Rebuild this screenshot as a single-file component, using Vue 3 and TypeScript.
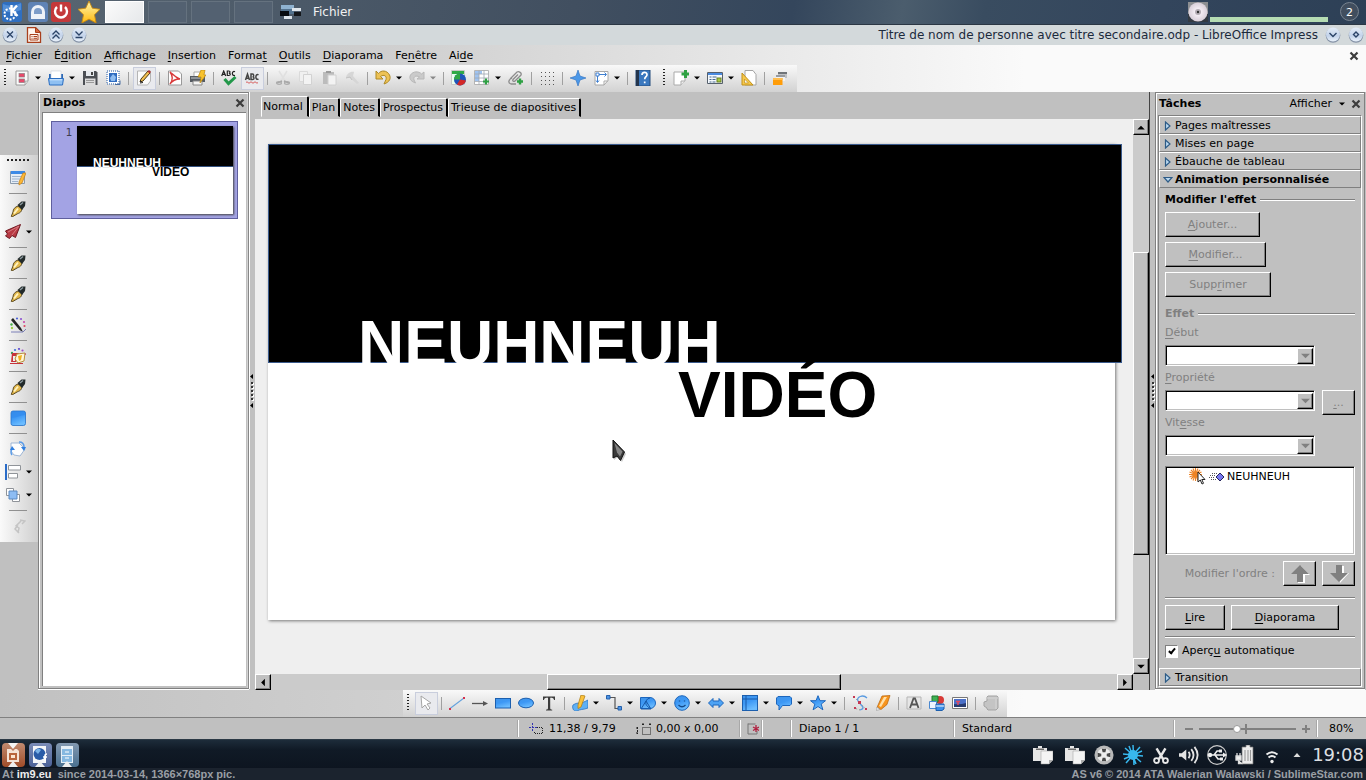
<script setup lang="ts">
import { ref } from 'vue'

interface Tool {
  kind: 'tool' | 'sep' | 'grip'
  icon?: string
  label?: string
  menu?: boolean
  on?: boolean
  off?: boolean
}

const sep: Tool = { kind: 'sep' }
const grip: Tool = { kind: 'grip' }
const t = (icon: string, label: string, flags = ''): Tool => ({
  kind: 'tool',
  icon,
  label,
  menu: flags.includes('m'),
  on: flags.includes('o'),
  off: flags.includes('d'),
})

const menus = ['_Fichier', 'É_dition', '_Affichage', '_Insertion', 'Forma_t', '_Outils', '_Diaporama', 'Fe_nêtre', 'Ai_de']

function accel(text: string): [string, string, string] {
  const i = text.indexOf('_')
  return i < 0 ? [text, '', ''] : [text.slice(0, i), text[i + 1], text.slice(i + 2)]
}

const standardBar: Tool[] = [
  t('new', 'Nouveau', 'm'), t('open', 'Ouvrir', 'm'), t('save', 'Enregistrer'), t('mail', 'Envoyer'), sep,
  t('edit', 'Éditer', 'o'), sep,
  t('pdf', 'Exporter au format PDF'), t('print', 'Imprimer'), sep,
  t('spell', 'Orthographe'), t('autospell', 'Vérification automatique', 'o'), sep,
  t('cut', 'Couper', 'd'), t('copy', 'Copier', 'd'), t('paste', 'Coller', 'd'), t('brush', 'Pinceau', 'd'), sep,
  t('undo', 'Annuler', 'm'), t('redo', 'Rétablir', 'md'), sep,
  t('chart', 'Diagramme'), t('table', 'Tableau', 'm'), t('link', 'Hyperlien'), sep,
  t('grid', 'Grille'), sep,
  t('navigator', 'Navigateur'), t('zoom', 'Zoom', 'm'), sep,
  t('help', 'Aide'), grip,
  t('newslide', 'Nouvelle diapo', 'm'), t('layout', 'Mise en page', 'm'), t('design', 'Conception'), sep,
  t('show', 'Diaporama'),
]

const sideBar: Tool[] = [
  t('form', 'Formulaire'), sep, t('pen', 'Plume'), t('plane', 'Envoi', 'm'), sep, t('pen', 'Ligne'), sep,
  t('pen', 'Courbe'), sep, t('wand', 'Effet'), sep, t('colors', 'Couleur'), sep, t('pen', 'Contour'), sep,
  t('square', 'Remplissage'), sep, t('rotate', 'Pivoter'), t('align', 'Aligner', 'm'), t('arrange', 'Disposer', 'm'), sep,
  t('interact', 'Interaction', 'd'),
]

const drawBar: Tool[] = [
  t('pointer', 'Sélection', 'o'), sep,
  t('line', 'Ligne'), t('arrow', 'Flèche'), t('rect', 'Rectangle'), t('ellipse', 'Ellipse'), t('text', 'Texte'), sep,
  t('curve', 'Courbe', 'm'), t('connector', 'Connecteur', 'm'), t('shapes', 'Formes de base', 'm'),
  t('smiley', 'Formes des symboles', 'm'), t('blockarrow', 'Flèches pleines', 'm'), t('flow', 'Organigramme', 'm'),
  t('callout', 'Légendes', 'm'), t('star', 'Étoiles', 'm'), sep,
  t('points', 'Points'), t('glue', 'Points de collage'), sep,
  t('fontwork', 'Fontwork'), t('gallery', 'Galerie'), t('picture', 'Image'), sep,
  t('extrude', 'Extrusion', 'd'),
]

const tabs = ['Normal', 'Plan', 'Notes', 'Prospectus', 'Trieuse de diapositives']
const activeTab = ref('Normal')
const sections = ['Pages maîtresses', 'Mises en page', 'Ébauche de tableau']
const effectButtons = [
  { label: '_Ajouter...', size: 'b95' },
  { label: '_Modifier...', size: 'b101' },
  { label: 'Supp_rimer', size: 'b106' },
]
const fields = [
  { id: 'debut', label: '_Début', more: false },
  { id: 'propriete', label: '_Propriété', more: true },
  { id: 'vitesse', label: 'Vit_esse', more: false },
]
const tray = ['clip', 'clip', 'reel', 'splat', 'scissors', 'volume', 'usb', 'battery', 'wifi', 'up']
const preview = ref(true)
const zoom = ref(38)
</script>

<template>
  <div class="screen">
    <svg class="sprite" width="0" height="0" aria-hidden="true">
      <defs>
        <linearGradient id="gBlue" x1="0" y1="0" x2="0.4" y2="1">
          <stop offset="0" stop-color="#3f93e8" /><stop offset="0.5" stop-color="#3d98f5" /><stop offset="1" stop-color="#6bbcff" />
        </linearGradient>
        <linearGradient id="gBtn" x1="0" y1="0" x2="0" y2="1">
          <stop offset="0" stop-color="#e4edf8" /><stop offset="0.6" stop-color="#c3d3ea" /><stop offset="1" stop-color="#eaf2fb" />
        </linearGradient>
        <linearGradient id="gStar" x1="0" y1="0" x2="0" y2="1">
          <stop offset="0" stop-color="#fff7b0" /><stop offset="1" stop-color="#ffb90f" />
        </linearGradient>
        <radialGradient id="gDisc"><stop offset="0" stop-color="#999" /><stop offset="0.3" stop-color="#f5eef5" /><stop offset="1" stop-color="#d9cfd9" /></radialGradient>
      </defs>
      <symbol id="i-new" viewBox="0 0 16 16"><path d="M2 1h12v10l-3 4H2z" fill="#fafafa" stroke="#9a9a9a" /><path d="M11 15v-4h3" fill="#ddd" stroke="#9a9a9a" stroke-width=".7" /><rect x="5" y="3.500" width="5.500" height="3.500" fill="#e8496a" stroke="#8b7d80" stroke-width=".7" /><rect x="5" y="9" width="5.500" height="3.500" fill="#e8496a" stroke="#8b7d80" stroke-width=".7" /></symbol>
      <symbol id="i-open" viewBox="0 0 16 16"><path d="M1 8V4h2v-1h10v1h2v4z" fill="#2a67b5" /><path d="M3 1h10v8H3z" fill="#fff" stroke="#c9d2dc" stroke-width=".6" /><path d="M.5 8.500h15l-1 6.500h-13z" fill="#8fc0f2" stroke="#2a6ec2" /><path d="M2 9.800h12" stroke="#d7ebff" /></symbol>
      <symbol id="i-save" viewBox="0 0 16 16"><path d="M1 1h13l1.500 1.500V15H1z" fill="#4c4f54" /><path d="M4 1h8v5H4z" fill="#e7eaee" /><path d="M9 2h2v3H9z" fill="#444" /><path d="M3 8.500h10.500V15H3z" fill="#dcdcdc" /><path d="M4 10.500h8M4 12.500h8" stroke="#999" /></symbol>
      <symbol id="i-mail" viewBox="0 0 16 16"><rect x="2" y="1" width="12" height="13" fill="#fff" stroke="#6b8fc0" stroke-width="1.500" stroke-dasharray="1 1" /><rect x="4" y="3" width="8" height="9" fill="#2f6cc0" /><path d="M5 8l3-4 3 3-1 4H6z" fill="#8fbdf0" /><path d="M10 14.500h5v-4" stroke="#4a6ea0" fill="none" /></symbol>
      <symbol id="i-edit" viewBox="0 0 16 16"><path d="M1.500 1h13v10l-3 4h-10z" fill="#fbfbfb" stroke="#b5b5b5" /><path d="M4 12l1-3 7-8 2 2-7 8z" fill="#f4c04f" stroke="#4a3a18" stroke-width="1" /><path d="M11.500 1.500L13 0l2 2-1.500 1.500z" fill="#b03030" /><path d="M4 12l.5-1.800L6 11.500z" fill="#222" /><path d="M4 13l3-.5" stroke="#222" /></symbol>
      <symbol id="i-pdf" viewBox="0 0 16 16"><path d="M1.500 1h10l3 3v11h-13z" fill="#fdfdfd" stroke="#999" /><path d="M3 2c2 1 4 5 10 7-5 0-8 2-10 5 3-4 3-8 0-12z" fill="none" stroke="#d93a3a" stroke-width="1.300" /></symbol>
      <symbol id="i-print" viewBox="0 0 16 16"><path d="M4 2h8v5H4z" fill="#fff" stroke="#aaa" /><path d="M0 6h15v6H0z" fill="#555b62" /><path d="M1 8h13" stroke="#c8ccd0" /><path d="M3 11h9v4H3z" fill="#f5f5f5" stroke="#888" /><path d="M11 0h4l-1 5h2l-6 8 1-6H8z" fill="#f8c22c" stroke="#b07a00" stroke-width=".6" /></symbol>
      <symbol id="i-spell" viewBox="0 0 16 16"><g fill="none" stroke="#222" stroke-width="1.200"><path d="M.7 6l2-5 2 5M1.400 4.300h2.500M6.300 1v4.500h1.500c2 0 2-2.300 0-2.300 1.600 0 1.600-2.200 0-2.200zM14 1.800c-3-1.800-4 4.500 0 3.600" /></g><path d="M3.500 9l4 4.500L14.500 7" fill="none" stroke="#23984a" stroke-width="3" /></symbol>
      <symbol id="i-autospell" viewBox="0 0 16 16"><g fill="none" stroke="#444" stroke-width="1.500"><path d="M1.500 10l2-6 2 6M2.300 8.200h2.400M7 4v5.500h1.500c2 0 2-2.700 0-2.700 1.600 0 1.600-2.800 0-2.800zM14.500 4.800c-3-1.800-4 5.500 0 4.400" /></g><path d="M2 12.500q1-1.500 2 0t2 0 2 0 2 0 2 0 2 0" fill="none" stroke="#d86060" /></symbol>
      <symbol id="i-cut" viewBox="0 0 16 16"><path d="M4 1l6 10M12 1L6 11" stroke="#e0e0e0" stroke-width="1.500" /><path d="M2 13l5-2M14 13l-5-2" stroke="#a5a5a5" stroke-width="1.500" /><ellipse cx="4" cy="13" rx="2.500" ry="1.300" fill="none" stroke="#adadad" stroke-width="1.200" /><ellipse cx="12" cy="13" rx="2.500" ry="1.300" fill="none" stroke="#adadad" stroke-width="1.200" /></symbol>
      <symbol id="i-copy" viewBox="0 0 16 16"><path d="M1.500 1.500h8v10h-8z" fill="#f0f0f0" stroke="#dadada" /><path d="M5.500 4.500h8v10h-8z" fill="#f3f3f3" stroke="#d2d2d2" /></symbol>
      <symbol id="i-paste" viewBox="0 0 16 16"><path d="M2 2h11v12H2z" fill="#bcbcbc" /><path d="M5 1h5v2H5z" fill="#9b9b9b" /><path d="M7 5h8v10H7z" fill="#f3f3f3" stroke="#d0d0d0" /></symbol>
      <symbol id="i-brush" viewBox="0 0 16 16"><path d="M2 8c0-4 5-7 8-6l-1 4 6 7-2 1-7-6z" fill="#d6d6d6" /><path d="M2 8l4-1 2 3" stroke="#c2c2c2" fill="none" /></symbol>
      <symbol id="i-undo" viewBox="0 0 16 16"><path d="M1 1v8h7L5.500 6.500C9 4 12 6 11 9.500l-2 4.500c6-2 7-6 5.500-9C12 0 6 0 3.500 3.500z" fill="#edc255" stroke="#ae8a27" /></symbol>
      <symbol id="i-redo" viewBox="0 0 16 16"><path d="M15 2v7H8l2.500-2C7 5 4 6.500 5 10l1.500 3C1 11 0 8 1.500 5 4 1 10 1 12.500 4z" fill="#cacaca" stroke="#b8b8b8" /></symbol>
      <symbol id="i-chart" viewBox="0 0 16 16"><path d="M.5.500h13v14H.5z" fill="#eafff0" stroke="#c7c7c7" /><path d="M1 1h12v3H1z" fill="#2faa46" /><circle cx="9" cy="9.500" r="6" fill="#1e55b8" /><path d="M9 9.500V3.500A6 6 0 0 0 3 9.500z" fill="#2fa844" /><path d="M9 9.500l6 1a6 6 0 0 1-9 4z" fill="#d32828" /></symbol>
      <symbol id="i-table" viewBox="0 0 16 16"><path d="M.5.500h14v14H.5z" fill="#fff" stroke="#b5b5b5" /><path d="M1 1h7v3H1zM1 4h4v7H1z" fill="#9fc3f1" /><path d="M.5 4h14M.5 8h14M.5 11.500h14M5 .5v14M10 .5v14" stroke="#9fa6b0" stroke-width=".8" /><path d="M12 8.500v6M9 11.500h6" stroke="#2ea043" stroke-width="2.200" /></symbol>
      <symbol id="i-link" viewBox="0 0 16 16"><path d="M2 9l7-7c2-1 5 1 4 3l-6 6c-1 1-3 0-2-1.500l5-5M4 8c-4 2-4 5-1 6h5" fill="none" stroke="#8d8d8d" stroke-width="1.300" /><path d="M12 8.500v6M9 11.500h6" stroke="#2ea043" stroke-width="2.400" /></symbol>
      <symbol id="i-grid" viewBox="0 0 16 16"><path d="M2 2.500h13M2 6.500h13M2 10.500h13M2 14.500h13" stroke="#555" stroke-dasharray="1 3" /></symbol>
      <symbol id="i-navigator" viewBox="0 0 16 16"><path d="M8 0l2 6 6 2-6 2-2 6-2-6-6-2 6-2z" fill="#4b98e8" stroke="#2e6fc0" stroke-width=".6" /></symbol>
      <symbol id="i-zoom" viewBox="0 0 16 16"><path d="M2 1.500h13v9l-4 4.500H2z" fill="#fff" stroke="#a8a8a8" /><path d="M11 15v-4h4" fill="none" stroke="#a8a8a8" /><path d="M4.500 5v7" fill="none" stroke="#3f7fd0" /><path d="M6 4.500h7M11.500 2.500l2 2-2 2M3 10.500l1.500 2 1.500-2" fill="none" stroke="#3f7fd0" /><path d="M3 3h3v3H3z" fill="#fff" stroke="#3f7fd0" /></symbol>
      <symbol id="i-help" viewBox="0 0 16 16"><path d="M1 0h14v16H1z" fill="#3a78bf" stroke="#244c7c" /><path d="M1 0h3v16H1z" fill="#24354d" /><path d="M7 5c0-3.500 5-3.500 5-.3 0 2-2.300 2-2.300 4.600M9.700 11.500v1.800" fill="none" stroke="#fff" stroke-width="1.700" /></symbol>
      <symbol id="i-newslide" viewBox="0 0 16 16"><path d="M1 2h11v9l-4 4H1z" fill="#fff" stroke="#aaa" /><path d="M8 15v-4h4" fill="#eee" stroke="#aaa" /><path d="M12.500 0v8M8.500 4h8" stroke="#2fa143" stroke-width="3" /></symbol>
      <symbol id="i-layout" viewBox="0 0 16 16"><path d="M.5 2.500h15v11H.5z" fill="#f4f8fd" stroke="#56606c" /><path d="M1 3h14v2H1z" fill="#4b8be0" /><path d="M2.500 7h2M2.500 9.500h2M2.500 12h2M5.500 7h4M5.500 9.500h3M5.500 12h3" stroke="#47698c" /><rect x="10" y="8" width="4" height="4" fill="#a7cc3e" stroke="#667c29" /></symbol>
      <symbol id="i-design" viewBox="0 0 16 16"><path d="M4 .5h8l3 4V15H4z" fill="#fff" stroke="#a5a5a5" /><path d="M1 3v12h11z" fill="#f6c84c" stroke="#c19019" /><path d="M3.500 9v4h4z" fill="#f8f8f8" stroke="#c19019" stroke-width=".7" /></symbol>
      <symbol id="i-show" viewBox="0 0 16 16"><path d="M6 2h9v6H6z" fill="#bfc1c4" /><path d="M6 2h9v2H6z" fill="#707478" /><path d="M4 5h9v6H4z" fill="#f2f2f2" /><path d="M4 5h9v2H4z" fill="#989b9f" /><path d="M1 8h9.500v7H1z" fill="#ff9d0a" /><path d="M1 8h9.500v2H1z" fill="#ffbd4f" /></symbol>
      <symbol id="i-form" viewBox="0 0 16 16"><path d="M.5 1.500h14v12H.5z" fill="#e4ecf5" stroke="#8b9aab" /><path d="M1 1h14v3H1z" fill="#3c8ae6" /><path d="M2 6.500h9M2 9h8M2 11.500h6" stroke="#9fb4cd" /><path d="M13 3h3l-4 10-3 2V12z" fill="#fcb837" stroke="#c47d12" stroke-width=".7" /></symbol>
      <symbol id="i-pen" viewBox="0 0 16 16"><path d="M8 5l4 3c-1 4-3 4-5 5l-5 3-.7-.7L3 11c0-3 2-5 5-6z" fill="#e3b84b" stroke="#5b4a22" /><path d="M4 12.500l4-5" stroke="#fff3c0" stroke-width="2" /><path d="M7.500 4l4-3.500h4L15 5l-3 4z" fill="#222a2a" /><path d="M10 4l3-2.500" stroke="#8f9da3" stroke-width="1.300" /></symbol>
      <symbol id="i-plane" viewBox="0 0 16 16"><path d="M15.500.500L.5 7l2 3-2 2 4 2.500 2.500-3 3.500 2z" fill="#b83a44" stroke="#6e1820" /><path d="M14 2L3 8M14 2L7 11" stroke="#d87a80" /></symbol>
      <symbol id="i-wand" viewBox="0 0 16 16"><path d="M3 1l8 10 2 4-3.500-2L1 3z" fill="#222" /><path d="M1 15h12l3-3" stroke="#7c80b8" fill="none" /><g><circle cx="7" cy="1.500" r="1.100" fill="#4c63d8" /><circle cx="11" cy="2" r="1.100" fill="#8d54d0" /><circle cx="14" cy="5" r="1.100" fill="#c848a8" /><circle cx="14.500" cy="9" r="1.100" fill="#e04860" /><circle cx="1.500" cy="7.500" r="1.200" fill="#48b048" /><circle cx="2" cy="11" r="1.200" fill="#9fce4a" /></g></symbol>
      <symbol id="i-colors" viewBox="0 0 16 16"><g><circle cx="5" cy="2" r="1.100" fill="#3c6dd8" /><circle cx="9" cy="1" r="1.100" fill="#6a54d0" /><circle cx="12.500" cy="2.500" r="1.100" fill="#a048c8" /><circle cx="15" cy="6" r="1.100" fill="#d84890" /><circle cx="2" cy="5" r="1.200" fill="#38a060" /></g><path d="M2 5h7l-3 9H1z" fill="#c8333a" /><path d="M3 8h3l-1 5H3z" fill="#efefef" /><path d="M7 6l8-1-1 8-6 2-3-4z" fill="#fff6d8" stroke="#b5903d" /><path d="M8 8l4-1-1 5-2 1z" fill="#f2b01e" /><path d="M0 15.500h13" stroke="#c8333a" /></symbol>
      <symbol id="i-square" viewBox="0 0 16 16"><rect x="1" y="1" width="14.500" height="14.500" rx="2" fill="url(#gBlue)" stroke="#2471c8" stroke-width=".8" /><path d="M1.500 8c5 0 9-3 14-3V3L14 1H2z" fill="#2a83ea" opacity=".45" /></symbol>
      <symbol id="i-rotate" viewBox="0 0 16 16"><path d="M1 2h8l6 6-5 7-6-1-3-4z" fill="#fdfdfd" stroke="#8aa8cf" stroke-width=".8" /><path d="M9 1c3 0 5 2 5 5M2 14c-2-3-1-4 0-6" fill="none" stroke="#5b9ce8" stroke-width="1.500" /><path d="M11 6h5l-2 4zM0 9h5L2 5z" fill="#2f7fe0" /></symbol>
      <symbol id="i-align" viewBox="0 0 16 16"><path d="M1 0v16" stroke="#2a6cc8" stroke-width="2" /><path d="M3.500 1.500h12v4.500h-12zM3.500 9.500h9V14h-9z" fill="#fff" stroke="#909499" /></symbol>
      <symbol id="i-arrange" viewBox="0 0 16 16"><path d="M1.500 1.500h7v7h-7zM7.500 7.500h7v7h-7z" fill="#fff" stroke="#8f9399" /><path d="M4 4h8v8H4z" fill="#8dbcf3" stroke="#5a88c0" /></symbol>
      <symbol id="i-interact" viewBox="0 0 16 16"><path d="M8 15l1-5-3-2 5-5M10 2l5 1-3 3M8 7l-3 4 4 4" fill="none" stroke="#c4c4c4" stroke-width="1.500" /></symbol>
      <symbol id="i-pointer" viewBox="0 0 16 16"><path d="M3 1l10 7-4 1 3 4-2 2-3-5-3 3z" fill="#fff" stroke="#a5a5a5" /></symbol>
      <symbol id="i-line" viewBox="0 0 16 16"><path d="M1 13.500L15 3" stroke="#67a3dd" stroke-width="1.200" /><path d="M0 13h2v2H0zM14 2h2v2h-2z" fill="#d3304e" /></symbol>
      <symbol id="i-arrow" viewBox="0 0 16 16"><path d="M0 8.500h13" stroke="#555" stroke-width="1.300" /><path d="M11 6l5 2.500L11 11z" fill="#555" /></symbol>
      <symbol id="i-rect" viewBox="0 0 16 16"><rect x=".5" y="3.500" width="15" height="9.500" fill="url(#gBlue)" stroke="#1c5fae" /></symbol>
      <symbol id="i-ellipse" viewBox="0 0 16 16"><ellipse cx="8" cy="8" rx="7.500" ry="4.800" fill="url(#gBlue)" stroke="#1c5fae" /></symbol>
      <symbol id="i-text" viewBox="0 0 16 16"><path d="M2 1.500h12V5h-1c-.4-2-1-2.300-3.800-2.300V13c0 1.500.5 1.500 2 1.700v.8H5v-.8c1.500-.2 2-.2 2-1.700V2.700C4 2.700 3.400 3 3 5H2z" fill="#3c3c3c" /></symbol>
      <symbol id="i-curve" viewBox="0 0 16 16"><path d="M1 10c3-2 5-2 7-2s4-1 8-3v8c-5 2-8 1-11 3-4 1-5-4-4-6z" fill="#5fb0f4" stroke="#2b75c4" stroke-width=".8" /><path d="M9 0l4 1-4 11-3 1.500V10z" fill="#fcc23a" stroke="#b3831c" stroke-width=".8" /></symbol>
      <symbol id="i-connector" viewBox="0 0 16 16"><path d="M2 2.500h7v11h5" fill="none" stroke="#555" stroke-width="1.200" /><path d="M.5.500h3.500V4H.5zM12 11.500h3.500V15H12z" fill="#4e94e4" stroke="#2561ac" /></symbol>
      <symbol id="i-shapes" viewBox="0 0 16 16"><path d="M.5 2.500H10a5.500 5.500 0 0 1 0 11H.5z" fill="url(#gBlue)" stroke="#1c66bd" /><path d="M6 6l-5 8h10zM6 6a5 5 0 0 1 4-3M6 6c-1 3 1 6 4 7" stroke="#1759a8" fill="none" /></symbol>
      <symbol id="i-smiley" viewBox="0 0 16 16"><circle cx="8" cy="8" r="7.300" fill="url(#gBlue)" stroke="#1c66bd" /><path d="M5.500 5.500v1M10.500 5.500v1M4.500 10q3.500 3.500 7 0" stroke="#164a88" stroke-width="1.300" fill="none" /></symbol>
      <symbol id="i-blockarrow" viewBox="0 0 16 16"><path d="M.5 8L5 3.500V6h6V3.500L15.500 8 11 12.500V10H5v2.500z" fill="#4ea3f4" stroke="#1c66bd" /></symbol>
      <symbol id="i-flow" viewBox="0 0 16 16"><rect x=".5" y=".5" width="15" height="15" fill="url(#gBlue)" stroke="#1c5fae" /><path d="M4 .5v15M.5 4h15" stroke="#1759a8" /></symbol>
      <symbol id="i-callout" viewBox="0 0 16 16"><path d="M2 1.500h12l1.500 1.500v6L14 10.500H6.500L3 15v-4.500H2L.5 9V3z" fill="url(#gBlue)" stroke="#1c66bd" /></symbol>
      <symbol id="i-star" viewBox="0 0 16 16"><path d="M8 .7l2 5h5.500l-4.300 3.400 1.700 5.700L8 11.500l-4.900 3.300 1.700-5.700L.5 5.700H6z" fill="url(#gBlue)" stroke="#1c66bd" /></symbol>
      <symbol id="i-points" viewBox="0 0 16 16"><path d="M15 3C11-1 4 2 6 6s9 7 2 9" fill="none" stroke="#5a9be0" stroke-width="1.300" /><path d="M2 2l12 12M8 15l-6-2" stroke="#888" stroke-dasharray="1 2" /><path d="M1 1h2v2H1zM6 6h3v3H6zM2 12h2v2H2zM13 13h2v2h-2z" fill="#c43853" /></symbol>
      <symbol id="i-glue" viewBox="0 0 16 16"><path d="M7 1l8-.5-3 9-6 5-4-2z" fill="#f7941d" stroke="#b3610a" stroke-width=".7" /><path d="M9 2h3l-6 10-2-1z" fill="#ffe0a8" /><path d="M2 12l3 2.500-3.500 1z" fill="#eee" stroke="#999" stroke-width=".6" /></symbol>
      <symbol id="i-fontwork" viewBox="0 0 16 16"><path d="M1 2h14v12H1z" fill="#e6e6e6" stroke="#b5b5b5" /><path d="M4 13l3.500-9.500h1.500L12.500 13M5.500 9.500h5.500" fill="none" stroke="#555" stroke-width="1.800" /></symbol>
      <symbol id="i-gallery" viewBox="0 0 16 16"><circle cx="11" cy="5" r="4" fill="#d83a36" /><path d="M3 1h6v6H3z" fill="#3fb052" stroke="#207a30" /><path d="M.5 6.500h7v7h-7z" fill="#eef5ff" stroke="#4a88d0" /><path d="M7 9h8v5l-2 1.500H7z" fill="#3d8fe8" stroke="#1c5fae" /><path d="M7 11h8" stroke="#fff" /></symbol>
      <symbol id="i-picture" viewBox="0 0 16 16"><path d="M.5 2.500h15v11H.5z" fill="#fff" stroke="#777" /><path d="M2 4h12v8H2z" fill="#4b70c8" /><path d="M2 9q6 1 12-1v4H2z" fill="#283c70" /><path d="M6 10V6M4 6.500h4" stroke="#e24a60" stroke-width="1.500" /></symbol>
      <symbol id="i-extrude" viewBox="0 0 16 16"><path d="M4 2l1-1h9l1 1v11l-2 2H5l-1-1v-1l-3-2V7l3-1z" fill="#c4c4c4" stroke="#a3a3a3" /><path d="M4 3h11M13 4v10" stroke="#d6d6d6" fill="none" /></symbol>
      <symbol id="i-kde" viewBox="0 0 20 20"><rect x="0" y="0" width="20" height="20" rx="3" fill="#2f6fc0" /><path d="M1 2q9 4 18-1v7q-9 4-18 1z" fill="#6ba3e4" opacity=".6" /><circle cx="8" cy="12" r="5.500" fill="none" stroke="#fff" stroke-width="2" stroke-dasharray="2 1.450" /><path d="M9.500 3v11M15 3.500L10.500 8.500 15.500 14" fill="none" stroke="#fff" stroke-width="2.400" /></symbol>
      <symbol id="i-lock" viewBox="0 0 20 20"><rect width="20" height="20" rx="3" fill="#5f83b5" /><path d="M3 17V10a7 7 0 0 1 14 0v7z" fill="#eef2f8" /><path d="M6 12v-2a4 4 0 0 1 8 0v2z" fill="#7c9cc8" /></symbol>
      <symbol id="i-power" viewBox="0 0 20 20"><rect width="20" height="20" rx="3" fill="#c4393a" /><path d="M6 5a6 6 0 1 0 8 0M10 2.500v7" fill="none" stroke="#fff" stroke-width="2.400" /></symbol>
      <symbol id="i-fav" viewBox="0 0 20 20"><path d="M10 0l3 6.500 7 1-5 5 1.500 7.500L10 16.500 3.500 20 5 12.500l-5-5 7-1z" fill="url(#gStar)" stroke="#c98a10" stroke-width=".8" /></symbol>
      <symbol id="i-device" viewBox="0 0 22 18"><path d="M1 2h13v9H1z" fill="#54738f" /><path d="M1 2h13v4H1z" fill="#8fb2d0" /><path d="M0 8h9v5H0z" fill="#090c10" /><path d="M12 5h9v3h-9zM4 13h8v3H4z" fill="#dfe6ec" /><path d="M14 9h7v4h-7z" fill="#15181c" /></symbol>
      <symbol id="i-disc" viewBox="0 0 20 20"><path d="M0 0h20v20H0z" fill="#8d8f92" /><path d="M0 12h20v8H0z" fill="#333a42" /><circle cx="10" cy="10" r="9.500" fill="url(#gDisc)" /><circle cx="10" cy="10" r="3" fill="#b4acb4" /><circle cx="10" cy="10" r="1.200" fill="#333" /></symbol>
      <symbol id="i-odp" viewBox="0 0 16 16"><path d="M1.500.500h8l5 5v10h-13z" fill="#fff6ee" stroke="#a8401c" stroke-width="1.300" /><path d="M9.500.500l5 5h-5z" fill="#d9683c" stroke="#a8401c" /><path d="M4 7.500h8V13H4z" fill="none" stroke="#a8401c" /><path d="M5.500 9.500h1M5.500 11.300h1M7.500 9.500H11M7.500 11.300H11" stroke="#a8401c" /></symbol>
      <symbol id="w-close" viewBox="0 0 16 16"><circle cx="8" cy="8.500" r="7.300" fill="#8492a6" /><circle cx="8" cy="7.500" r="7" fill="url(#gBtn)" /><path d="M5 4.500l6 6M11 4.500l-6 6" stroke="#2b4468" stroke-width="1.300" /></symbol>
      <symbol id="w-shade" viewBox="0 0 16 16"><circle cx="8" cy="8.500" r="7.300" fill="#8492a6" /><circle cx="8" cy="7.500" r="7" fill="url(#gBtn)" /><path d="M4.500 7.500L8 4l3.500 3.500M4.500 11.500L8 8l3.500 3.500" fill="none" stroke="#2b4468" stroke-width="1.300" /></symbol>
      <symbol id="w-keep" viewBox="0 0 16 16"><circle cx="8" cy="8.500" r="7.300" fill="#8492a6" /><circle cx="8" cy="7.500" r="7" fill="url(#gBtn)" /><path d="M4.500 4.500L8 8l3.500-3.500M4.500 10.500h7" fill="none" stroke="#2b4468" stroke-width="1.300" /></symbol>
      <symbol id="w-min" viewBox="0 0 16 16"><circle cx="8" cy="8.500" r="7.300" fill="#8492a6" /><circle cx="8" cy="7.500" r="7" fill="url(#gBtn)" /><path d="M4.500 6L8 9.500 11.500 6" fill="none" stroke="#2b4468" stroke-width="1.400" /></symbol>
      <symbol id="w-max" viewBox="0 0 16 16"><circle cx="8" cy="8.500" r="7.300" fill="#8492a6" /><circle cx="8" cy="7.500" r="7" fill="url(#gBtn)" /><path d="M8 5l2.500 2.500L8 10 5.500 7.500z" fill="none" stroke="#2b4468" stroke-width="1.400" /></symbol>
      <symbol id="i-x" viewBox="0 0 10 10"><path d="M1.500 1.500l7 7M8.500 1.500l-7 7" stroke="#3c3c3c" stroke-width="2.200" /></symbol>
      <symbol id="i-tri" viewBox="0 0 6 4"><path d="M0 .5h6L3 3.500z" fill="currentColor" /></symbol>
      <symbol id="i-split" viewBox="0 0 6 34"><path d="M4 0v5L1 2.500zM4 29v5L1 31.500z" fill="#000" /><path d="M3 9h2v2H3zM3 13h2v2H3zM3 17h2v2H3zM3 21h2v2H3zM3 25h2v2H3z" fill="#fff" /><path d="M2 8h2v2H2zM2 12h2v2H2zM2 16h2v2H2zM2 20h2v2H2zM2 24h2v2H2z" fill="#333" /></symbol>
      <symbol id="i-closed" viewBox="0 0 8 10"><path d="M1.500 1v8L6 5z" fill="#b9d8f0" stroke="#2d5b86" stroke-width="1.200" /></symbol>
      <symbol id="i-opened" viewBox="0 0 10 8"><path d="M1 1.500h8L5 6z" fill="#b9d8f0" stroke="#2d5b86" stroke-width="1.200" /></symbol>
      <symbol id="i-burst" viewBox="0 0 18 18"><path d="M6.500 0v13M0 6.500h13M2 2l9 9M11 2l-9 9M4 .5l5 12M9 .5l-5 12M.5 4l12 5M.5 9l12-5" stroke="#ef8322" stroke-width="1.100" /><path d="M9 4v10l2.300-2 1.700 4 1.500-.7-1.700-3.800H16z" fill="#fff" stroke="#222" /></symbol>
      <symbol id="i-motion" viewBox="0 0 16 10"><path d="M3 1.500h5M1 3.500h6M0 5.500h6M2 7.500h5" stroke="#555" stroke-dasharray="1 1" /><path d="M11 1l4 4-4 4-4-4z" fill="#7878f0" stroke="#25255c" /></symbol>
      <symbol id="i-arrup" viewBox="0 0 20 20"><path d="M11 2l9 9h-5v8H8v-8z" fill="#fff" /><path d="M10 1l9 9h-6v8H7v-8H1z" fill="#808080" /></symbol>
      <symbol id="i-arrdown" viewBox="0 0 20 20"><path d="M8 2h7v7h5l-9 10z" fill="#fff" /><path d="M7 1h6v8h6l-9 9-9-9h6z" fill="#808080" /></symbol>
      <symbol id="i-pos" viewBox="0 0 16 12"><path d="M3.500 0v9M0 4.500h8" stroke="#3232b0" stroke-dasharray="2 1" /><path d="M8 4.500h5.500v6h-8V8" fill="none" stroke="#222" stroke-dasharray="1 1" /></symbol>
      <symbol id="i-size" viewBox="0 0 16 12"><path d="M6.500 4.500h8v7h-8z" fill="none" stroke="#222" stroke-dasharray="1 1" /><path d="M6 1.500h2M13 1.500h2M7 0v3M14 0v3M1.500 4v7M0 5h3M0 10h3" stroke="#222" stroke-dasharray="2 1" /></symbol>
      <symbol id="i-doc" viewBox="0 0 12 12"><path d="M1 1h7.500M1 .5v10.500h9V8" fill="none" stroke="#777" /><path d="M9 2v7M6 4l6 3.500M12 4L6 7.500" stroke="#b02040" stroke-width="1.300" /></symbol>
      <symbol id="i-clip" viewBox="0 0 20 20"><path d="M0 3h5V1h4v2h5v13H0z" fill="#e6e6e6" /><path d="M3 3.500h8v1.500H3z" fill="#6c6c6c" /><path d="M8 6h12v9l-4 4H8z" fill="#f4f4f4" stroke="#999" stroke-width=".5" /><path d="M16 19v-4h4" fill="#aaa" /></symbol>
      <symbol id="i-reel" viewBox="0 0 22 22"><circle cx="11" cy="11" r="10.500" fill="#b9b9b9" /><circle cx="11" cy="11" r="7.500" fill="#eee" /><path d="M8.500 4h5l-1 4h-3zM8.500 18h5l-1-4h-3zM4 8.500v5l4-1v-3zM18 8.500v5l-4-1v-3z" fill="#494949" /></symbol>
      <symbol id="i-splat" viewBox="0 0 20 20"><circle cx="10" cy="10" r="5" fill="#38b8ee" /><path d="M10 0l1 20M0 9l20 2M2 3l16 14M17 2L3 18M6 1l7 18M1 14l18-8" stroke="#38b8ee" stroke-width="1.500" /></symbol>
      <symbol id="i-scissors" viewBox="0 0 18 18"><path d="M5 3l6 10M13 3L7 13" stroke="#e8e8e8" stroke-width="2.200" /><circle cx="5" cy="14" r="2.200" fill="none" stroke="#e8e8e8" stroke-width="1.700" /><circle cx="13" cy="14" r="2.200" fill="none" stroke="#e8e8e8" stroke-width="1.700" /></symbol>
      <symbol id="i-volume" viewBox="0 0 22 20"><path d="M0 8h3l5-4v12l-5-4H0z" fill="#e4e4e4" /><path d="M10.500 6.500q2.500 3.500 0 7M13.500 3.500q5 6.500 0 13M17 1q7 9 0 18" fill="none" stroke="#e4e4e4" stroke-width="2" /></symbol>
      <symbol id="i-usb" viewBox="0 0 20 20"><circle cx="10" cy="10" r="9.300" fill="none" stroke="#ccc" stroke-width="1.200" /><path d="M2 10h16M7 10l3-4h3M8 10l3 4h3" fill="none" stroke="#f0f0f0" stroke-width="1.500" /><path d="M16 7.500l4 2.500-4 2.500zM12 4.500h3v3h-3zM13 12.500h3v3h-3z" fill="#f0f0f0" /><circle cx="3" cy="10" r="2.200" fill="#f0f0f0" /></symbol>
      <symbol id="i-battery" viewBox="0 0 18 20"><path d="M8 2h2V0h4v2h3v17H6V2z" fill="#ececec" stroke="#777" stroke-width=".7" /><path d="M9 5v11M12 5v11M14.500 5v11" stroke="#999" stroke-width="1.100" /><path d="M0 11h5v4H0zM1 8v3M4 8v3M2.500 15v3.500h4" fill="#eee" stroke="#ddd" stroke-width="1.300" /></symbol>
      <symbol id="i-wifi" viewBox="0 0 18 18"><path d="M3.500 8.500q5.500-4.500 11 0M5.500 11.500q3.500-3 7 0" fill="none" stroke="#ececec" stroke-width="2" /><circle cx="9" cy="15.500" r="1.700" fill="#ececec" /></symbol>
      <symbol id="i-up" viewBox="0 0 10 18"><path d="M1.500 11L5 7l3.500 4z" fill="#ddd" /></symbol>
      <symbol id="i-cursor" viewBox="0 0 16 26"><path d="M2 3v18l4-3 4 5 4-8-2-3z" fill="#000" opacity=".2" /><path d="M1 1v18l4-2 3.500 4.500 4-8.500z" fill="#3a3a3a" stroke="#111" /><path d="M2.500 4l8 8.500-2.500 5-3-4z" fill="#858585" /></symbol>
    </svg>

    <header class="panel">
      <button class="flat" aria-label="Menu"><svg width="20" height="20"><use href="#i-kde" /></svg></button>
      <button class="flat lock" aria-label="Verrouiller"><svg width="20" height="20"><use href="#i-lock" /></svg></button>
      <button class="flat" aria-label="Éteindre"><svg width="20" height="20"><use href="#i-power" /></svg></button>
      <button class="flat fav" aria-label="Favoris"><svg width="22" height="22"><use href="#i-fav" /></svg></button>
      <button v-for="n in 4" :key="n" class="desk" :class="{ current: n === 1 }" :aria-label="'Bureau ' + n"></button>
      <svg class="device" width="22" height="18"><use href="#i-device" /></svg>
      <button class="flat panel-menu">Fichier</button>
      <span class="grow"></span>
      <svg width="20" height="20"><use href="#i-disc" /></svg>
      <span class="meter"></span>
      <span class="badge">2</span>
    </header>

    <div class="titlebar">
      <button class="flat" aria-label="Fermer"><svg width="16" height="16"><use href="#w-close" /></svg></button>
      <svg class="odp" width="16" height="16"><use href="#i-odp" /></svg>
      <button class="flat" aria-label="Enrouler"><svg width="16" height="16"><use href="#w-shade" /></svg></button>
      <button class="flat" aria-label="Garder dessous"><svg width="16" height="16"><use href="#w-keep" /></svg></button>
      <h1>Titre de nom de personne avec titre secondaire.odp - LibreOffice Impress</h1>
      <button class="flat" aria-label="Réduire"><svg width="16" height="16"><use href="#w-min" /></svg></button>
      <button class="flat" aria-label="Agrandir"><svg width="16" height="16"><use href="#w-max" /></svg></button>
    </div>

    <div class="bars">
      <nav class="menubar">
        <button v-for="m in menus" :key="m" class="flat">{{ accel(m)[0] }}<u>{{ accel(m)[1] }}</u>{{ accel(m)[2] }}</button>
        <span class="grow"></span>
        <button class="flat close-doc" aria-label="Fermer le document"><svg width="10" height="10"><use href="#i-x" /></svg></button>
      </nav>
      <div class="toolbar standard">
        <span class="grip"></span>
        <template v-for="(b, i) in standardBar" :key="i">
          <i v-if="b.kind === 'sep'" class="sep"></i>
          <span v-else-if="b.kind === 'grip'" class="grip second"></span>
          <button v-else class="tool" :class="{ on: b.on, off: b.off, drop: b.menu }" :aria-label="b.label">
            <svg width="16" height="16"><use :href="'#i-' + b.icon" /></svg>
            <svg v-if="b.menu" class="caret" width="6" height="4"><use href="#i-tri" /></svg>
          </button>
        </template>
      </div>
    </div>

    <main class="main">
      <aside class="side">
        <div class="sidebar">
          <span class="hgrip"></span>
          <template v-for="(b, i) in sideBar" :key="i">
            <i v-if="b.kind === 'sep'" class="sep"></i>
            <button v-else class="tool" :class="{ drop: b.menu }" :aria-label="b.label">
              <svg width="16" height="16"><use :href="'#i-' + b.icon" /></svg>
              <svg v-if="b.menu" class="caret" width="6" height="4"><use href="#i-tri" /></svg>
            </button>
          </template>
        </div>
      </aside>

      <section class="slides">
        <header class="pane-head">
          <h2>Diapos</h2>
          <button class="flat" aria-label="Fermer le volet"><svg width="10" height="10"><use href="#i-x" /></svg></button>
        </header>
        <div class="slide-list">
          <button class="thumb">
            <span class="num">1</span>
            <span class="mini">
              <span class="mini-dark"></span>
              <span class="mini-title">NEUHNEUH</span>
              <span class="mini-sub">VIDÉO</span>
            </span>
          </button>
        </div>
      </section>

      <div class="splitter"><svg width="6" height="34"><use href="#i-split" /></svg></div>

      <section class="editor">
        <div class="tabs" role="tablist">
          <button v-for="n in tabs" :key="n" role="tab" :class="{ active: n === activeTab }" @click="activeTab = n">{{ n }}</button>
        </div>
        <div class="view">
          <div class="workspace">
            <div class="slide">
              <div class="dark"></div>
              <span class="big light">NEUHNEUH</span>
              <span class="big black">VIDÉO</span>
              <svg class="cursor" width="16" height="26"><use href="#i-cursor" /></svg>
            </div>
          </div>
          <div class="scroll vertical">
            <button class="bevel" aria-label="Haut"><svg class="flip" width="8" height="5"><use href="#i-tri" /></svg></button>
            <div class="lane"><span class="before"></span><span class="bevel knob"></span><span class="after"></span></div>
            <button class="bevel" aria-label="Bas"><svg width="8" height="5"><use href="#i-tri" /></svg></button>
          </div>
          <div class="scroll horizontal">
            <button class="bevel" aria-label="Gauche"><svg class="left" width="8" height="5"><use href="#i-tri" /></svg></button>
            <div class="lane"><span class="before"></span><span class="bevel knob"></span><span class="after"></span></div>
            <button class="bevel" aria-label="Droite"><svg class="right" width="8" height="5"><use href="#i-tri" /></svg></button>
          </div>
          <span class="corner"></span>
        </div>
      </section>

      <div class="splitter right-split"><svg width="6" height="34"><use href="#i-split" /></svg></div>

      <aside class="tasks">
        <header class="pane-head">
          <h2>Tâches</h2>
          <button class="flat show">Afficher <svg width="6" height="4"><use href="#i-tri" /></svg></button>
          <button class="flat" aria-label="Fermer les tâches"><svg width="10" height="10"><use href="#i-x" /></svg></button>
        </header>
        <div class="task-box">
          <button v-for="s in sections" :key="s" class="section"><svg width="8" height="10"><use href="#i-closed" /></svg>{{ s }}</button>
          <button class="section open"><svg width="10" height="8"><use href="#i-opened" /></svg>Animation personnalisée</button>
          <div class="anim">
            <h3>Modifier l'effet</h3>
            <button v-for="b in effectButtons" :key="b.label" class="btn bevel" :class="b.size" disabled>
              <span>{{ accel(b.label)[0] }}<u>{{ accel(b.label)[1] }}</u>{{ accel(b.label)[2] }}</span>
            </button>
            <h3 class="dim">Effet</h3>
            <template v-for="f in fields" :key="f.id">
              <label :for="f.id">{{ accel(f.label)[0] }}<u>{{ accel(f.label)[1] }}</u>{{ accel(f.label)[2] }}</label>
              <div class="field">
                <span class="combo">
                  <select :id="f.id" disabled></select>
                  <span class="combo-arrow bevel"><svg width="9" height="6"><use href="#i-tri" /></svg></span>
                </span>
                <button v-if="f.more" class="btn bevel b33" disabled><span><u>.</u>..</span></button>
              </div>
            </template>
            <div class="effects">
              <div class="effect"><svg width="18" height="18"><use href="#i-burst" /></svg><svg width="16" height="10"><use href="#i-motion" /></svg>NEUHNEUH</div>
            </div>
            <div class="order">
              <span>Modifier l'ordre :</span>
              <button class="btn bevel b33" aria-label="Monter"><svg width="20" height="20"><use href="#i-arrup" /></svg></button>
              <button class="btn bevel b33" aria-label="Descendre"><svg width="20" height="20"><use href="#i-arrdown" /></svg></button>
            </div>
            <hr />
            <div class="run">
              <button class="btn bevel b60"><span><u>L</u>ire</span></button>
              <button class="btn bevel b108"><span><u>D</u>iaporama</span></button>
            </div>
            <hr />
            <label class="check"><input v-model="preview" type="checkbox" /><span>Aperç<u>u</u> automatique</span></label>
          </div>
          <button class="section last"><svg width="8" height="10"><use href="#i-closed" /></svg>Transition</button>
        </div>
      </aside>
    </main>

    <div class="drawrow">
      <div class="toolbar drawing">
        <span class="grip"></span>
        <template v-for="(b, i) in drawBar" :key="i">
          <i v-if="b.kind === 'sep'" class="sep"></i>
          <button v-else class="tool" :class="{ on: b.on, drop: b.menu }" :aria-label="b.label">
            <svg width="16" height="16"><use :href="'#i-' + b.icon" /></svg>
            <svg v-if="b.menu" class="caret" width="6" height="4"><use href="#i-tri" /></svg>
          </button>
        </template>
      </div>
    </div>

    <footer class="status">
      <span class="cell hint"></span>
      <span class="cell geometry">
        <svg width="16" height="12"><use href="#i-pos" /></svg><span class="at">11,38 / 9,79</span>
        <svg width="16" height="12"><use href="#i-size" /></svg><span>0,00 x 0,00</span>
      </span>
      <span class="cell mod"><svg width="12" height="12"><use href="#i-doc" /></svg></span>
      <span class="cell blank"></span>
      <span class="cell page">Diapo 1 / 1</span>
      <span class="cell master">Standard</span>
      <span class="cell zoomer">
        <button class="flat" aria-label="Zoom arrière"><svg width="8" height="8"><path d="M0 4h8" stroke="#808080" stroke-width="2" /></svg></button>
        <input v-model="zoom" type="range" min="0" max="100" aria-label="Zoom" />
        <button class="flat" aria-label="Zoom avant"><svg width="8" height="8"><path d="M0 4h8M4 0v8" stroke="#808080" stroke-width="2" /></svg></button>
      </span>
      <span class="cell percent">80%</span>
    </footer>

    <div class="taskbar">
      <button class="app impress" aria-label="Impress"><svg width="22" height="24" viewBox="0 0 22 24"><path d="M6 0h10l-5 6z" fill="#f4f4f4" /><path d="M5 6h4l2 2 2-2h2l2 2v11H5z" fill="#f4e2d6" /><path d="M7 10h8v7H7z" fill="#b8643c" /><path d="M9 12h4v3H9z" fill="#fbe4d0" /><path d="M6 24l5-6 5 6z" fill="#eee" /></svg></button>
      <button class="app web" aria-label="Navigateur"><svg width="22" height="24" viewBox="0 0 22 24"><path d="M4 3h13v17H4z" fill="#f3f5f9" /><circle cx="10.500" cy="11" r="6" fill="#2a5ca8" /><path d="M6 8q3-4 6-1l-3 4z" fill="#79b2e8" /><path d="M16 18v-5q0-2 2-2M14 14h4" stroke="#fff" stroke-width="1.600" fill="none" /><path d="M6 24l5-6 5 6z" fill="#eee" /></svg></button>
      <button class="app files" aria-label="Fichiers"><svg width="22" height="24" viewBox="0 0 22 24"><path d="M5 3h12v17H5z" fill="#e4eef6" /><path d="M6 6h10v6H6zM6 13h10v6H6z" fill="#86b8e0" /><path d="M9 9h4M9 15h4" stroke="#fff" /><path d="M6 24l5-6 5 6z" fill="#eee" /></svg></button>
      <span class="grow"></span>
      <svg v-for="(n, i) in tray" :key="i" class="tray" :class="n" height="20"><use :href="'#i-' + n" /></svg>
      <time>19:08</time>
    </div>

    <div class="credit">
      <span>At <b>im9.eu</b>&nbsp; since 2014-03-14, 1366×768px pic.</span>
      <span>AS v6 © 2014 ATA Walerian Walawski / SublimeStar.com</span>
    </div>
  </div>
</template>

<style>
body {
  margin: 0;
}
</style>

<style scoped>
.screen {
  display: flex;
  flex-direction: column;
  min-height: 100vh;
  overflow: hidden;
  font: 11px/14px 'DejaVu Sans', sans-serif;
  color: #000;
  background: #c0c0c0;
}
.sprite {
  position: absolute;
}
.screen *,
.screen *::before,
.screen *::after {
  box-sizing: border-box;
}
svg {
  display: block;
  flex: none;
}
button {
  font: inherit;
  color: inherit;
  margin: 0;
  padding: 0;
  border: 0;
  border-radius: 0;
  background: none;
}
h1,
h2,
h3 {
  margin: 0;
  font-size: 11px;
  white-space: nowrap;
}
u {
  text-underline-offset: 2px;
}
.grow {
  flex: 1;
}
.bevel {
  border: 1px solid;
  border-color: #fff #000 #000 #fff;
  background: #c0c0c0;
  box-shadow: inset -1px -1px #808080;
}

/* desktop panel */
.panel {
  display: flex;
  align-items: center;
  height: 25px;
  padding: 0 7px 1px 2px;
  background: linear-gradient(100deg, #5a6772 0, #4b5968 22%, #414f60 42%, #34465c 58%, #4b5d6d 66%, #394c60 72%, #33455c 85%, #2d4056 100%);
  border-bottom: 1px solid #2b3744;
}
.lock {
  margin: 0 3px 0 6px;
}
.fav {
  margin: 0 5px 0 7px;
}
.desk {
  width: 39px;
  height: 22px;
  margin-right: 4px;
  background: #536171;
  border: 1px solid #65727f;
}
.desk.current {
  background: linear-gradient(135deg, #fbfbfb, #e6e8ea);
  border-color: #fff;
}
.device {
  margin: 0 11px 0 3px;
}
.panel-menu {
  font-size: 12px;
  color: #f2f2f2;
}
.meter {
  width: 118px;
  height: 5px;
  margin: 15px 12px 0 2px;
  background: #b5dcb3;
}
.badge {
  width: 19px;
  height: 19px;
  border: 1px solid #78838f;
  border-radius: 50%;
  background: #414e5e;
  color: #fff;
  line-height: 20px;
  text-align: center;
}

/* window title */
.titlebar {
  display: flex;
  align-items: center;
  gap: 7px;
  height: 20px;
  padding: 0 2px;
  background: #d3d9db;
}
.odp {
  margin: 0 -1px 0 1px;
}
h1 {
  flex: 1;
  text-align: right;
  font-size: 12px;
  font-weight: 400;
  color: #1c2a3c;
}

/* menus and toolbars */
.bars,
.drawrow {
  background: linear-gradient(90deg, #c0c0c0 0, #d0d0d0 30%, #fafafa 75%);
}
.menubar {
  display: flex;
  align-items: center;
  height: 20px;
  padding-top: 1px;
}
.menubar .flat {
  padding: 0 6px;
}
.menubar .close-doc {
  padding: 0 7px;
}
.toolbar {
  display: flex;
  align-items: center;
  width: max-content;
  height: 27px;
  padding-bottom: 1px;
  background: linear-gradient(180deg, #f9f9f9, #d2d2d2);
}
.standard {
  padding-right: 5px;
}
.grip {
  flex: none;
  width: 11px;
  height: 18px;
  background: repeating-linear-gradient(180deg, #222 0 1px, transparent 1px 3px) 4px 0 / 2px 100% no-repeat;
}
.grip.second {
  width: 15px;
  background-position-x: 8px;
}
.sep {
  flex: none;
  width: 8px;
  height: 13px;
  background: linear-gradient(#a0a0a0, #a0a0a0) 3px 0 / 1px 100% no-repeat;
}
.tool {
  display: flex;
  flex: none;
  align-items: center;
  width: 23px;
  height: 23px;
  padding-left: 3px;
}
.tool.on {
  box-shadow: inset 0 0 0 1px #c9cedd;
  background: #e9eaee;
}
.tool.drop {
  width: 34px;
}
.caret {
  margin-left: 5px;
}
.tool.off .caret {
  color: #888;
}

/* main columns */
.main {
  display: flex;
  flex: 1;
  height: 598px;
}
.side {
  width: 38px;
  padding-top: 63px;
  background: #c0c0c0;
}
.sidebar {
  display: flex;
  flex-direction: column;
  align-items: center;
  padding: 0 2px 5px 0;
  background: linear-gradient(90deg, #fafafa, #cfcfcf);
}
.hgrip {
  width: 22px;
  height: 2px;
  margin: 4px 0 5px;
  background: repeating-linear-gradient(90deg, #222 0 2px, transparent 2px 4px);
}
.sidebar .sep {
  width: 18px;
  height: 8px;
  background: linear-gradient(#909090, #909090) 0 4px / 100% 1px no-repeat;
}
.sidebar .tool.drop {
  padding-left: 4px;
}
.pane-head {
  display: flex;
  align-items: center;
  height: 18px;
}
.pane-head h2 {
  flex: 1;
}
.slides {
  display: flex;
  flex-direction: column;
  width: 211px;
  margin-bottom: 1px;
  padding: 0 2px 2px 3px;
  border: 1px solid #808080;
  border-right-color: #888;
  box-shadow: inset 1px 1px #fff, inset -1px 0 #d4d4d4, 0 1px #fff, 1px 0 #fff;
}
.slides .pane-head {
  height: 19px;
  padding: 0 1px;
}
.slide-list {
  flex: 1;
  padding: 8px;
  border: 1px solid #808080;
  border-width: 1px 0 0 1px;
  background: #fff;
}
.thumb {
  display: flex;
  width: 100%;
  height: 98px;
  padding: 4px;
  border: 1px solid #5f5f9e;
  background: #a3a3e4;
}
.num {
  width: 21px;
  padding-right: 5px;
  text-align: right;
  color: #3d3d52;
  font-family: 'DejaVu Sans Mono', monospace;
}
.mini {
  position: relative;
  flex: 1;
  height: 88px;
  background: #fff;
  box-shadow: 1px 1px 2px #444;
  font: bold 12px/12px 'Liberation Sans', Arial, sans-serif;
}
.mini-dark {
  display: block;
  height: 41px;
  background: #000;
  border-bottom: 1px solid #33507e;
}
.mini-title,
.mini-sub {
  position: absolute;
  left: 16px;
  top: 31px;
  color: #fff;
  text-shadow: 0 0 1px #000;
}
.mini-sub {
  left: 75px;
  top: 40px;
  color: #000;
  text-shadow: none;
}
.splitter {
  display: flex;
  align-items: center;
  width: 6px;
}
.right-split {
  border-left: 1px solid #444;
}
.editor {
  display: flex;
  flex: 1;
  flex-direction: column;
  min-width: 0;
}
.tabs {
  display: flex;
  align-items: flex-end;
  height: 27px;
  padding: 0 6px 2px;
}
.tabs button {
  height: 19px;
  padding: 0 3px 0 2px;
  border: 1px solid;
  border-color: #fff #000 transparent #fff;
  border-right-width: 2px;
  border-radius: 2px 2px 0 0;
  white-space: nowrap;
}
.tabs .active {
  height: 21px;
  padding: 0 4px 0 1px;
}
.view {
  display: grid;
  flex: 1;
  grid-template-columns: 1fr 16px;
  grid-template-rows: 1fr 16px;
}
.workspace {
  padding: 25px 18px 54px 13px;
  background: #efefef;
}
.slide {
  position: relative;
  height: 100%;
  background: #fff;
  box-shadow: 1px 1px 3px #777;
}
.dark {
  width: calc(100% + 7px);
  height: 219px;
  background: #000;
  border: 1px solid #3a5a8c;
}
.big {
  position: absolute;
  left: 90px;
  top: 163px;
  font: bold 64px/74px 'Liberation Sans', Arial, sans-serif;
  color: #fff;
}
.big.black {
  left: 410px;
  top: 214px;
  color: #000;
}
.cursor {
  position: absolute;
  left: 344px;
  top: 295px;
}
.scroll {
  display: flex;
  background: #cbcbcb;
}
.vertical {
  flex-direction: column;
}
.scroll button {
  display: flex;
  flex: none;
  align-items: center;
  justify-content: center;
  width: 16px;
  height: 16px;
}
.lane {
  display: flex;
  flex: 1;
}
.vertical .lane {
  flex-direction: column;
}
.vertical .before {
  flex: 118;
}
.vertical .knob {
  flex: 303;
}
.vertical .after {
  flex: 104;
}
.horizontal .before {
  flex: 277;
}
.horizontal .knob {
  flex: 292;
}
.horizontal .after {
  flex: 277;
}
.corner {
  background: #c0c0c0;
}
.flip {
  transform: rotate(180deg);
}
.left {
  transform: rotate(90deg);
}
.right {
  transform: rotate(-90deg);
}

/* task pane */
.tasks {
  display: flex;
  flex-direction: column;
  width: 210px;
  margin: 0 1px 1px 0;
  padding: 2px 3px 2px 2px;
  border: 1px solid #808080;
  box-shadow: inset 1px 1px #fff, 0 1px #fff;
}
.tasks .pane-head {
  padding-left: 1px;
}
.show {
  display: flex;
  align-items: center;
  gap: 7px;
  margin-right: 6px;
}
.task-box {
  display: flex;
  flex: 1;
  flex-direction: column;
  margin-top: 2px;
  border: 1px solid #808080;
  border-width: 1px 0 0 1px;
  box-shadow: 1px 1px #fff;
}
.section {
  display: flex;
  align-items: center;
  gap: 3px;
  width: 100%;
  height: 18px;
  padding: 1px 4px 0;
  border: 1px solid;
  border-color: #fff #808080 #808080 #fff;
}
.section.open {
  gap: 2px;
  padding: 1px 3px 0;
  font-weight: 700;
}
.section.last {
  margin-top: auto;
}
.anim {
  padding: 5px 6px 0;
}
h3 {
  display: flex;
  align-items: center;
  gap: 4px;
  height: 14px;
  margin-bottom: 5px;
}
h3::after {
  content: '';
  flex: 1;
  height: 2px;
  border-top: 1px solid #808080;
  background: #fff;
}
h3.dim {
  margin: 10px 0 5px;
  color: #808080;
}
.btn {
  display: flex;
  align-items: center;
  justify-content: center;
  height: 25px;
}
.anim > .btn {
  margin-bottom: 5px;
}
.btn:disabled,
.anim > label:not(.check),
.order {
  color: #808080;
}
.b33 {
  width: 33px;
}
.b60 {
  width: 60px;
}
.b95 {
  width: 95px;
}
.b101 {
  width: 101px;
}
.b106 {
  width: 106px;
}
.b108 {
  width: 108px;
}
.anim > label:not(.check) {
  display: block;
  height: 14px;
  margin-bottom: 5px;
}
.field {
  display: flex;
  gap: 7px;
  height: 21px;
  margin-bottom: 5px;
}
.combo {
  display: flex;
  width: 150px;
  height: 21px;
  border: 1px solid;
  border-color: #808080 #fff #fff #808080;
  box-shadow: inset 1px 1px #000, inset -1px -1px #c0c0c0;
  padding: 2px 1px 1px 2px;
  background: #fff;
}
.combo select {
  flex: 1;
  min-width: 0;
  border: 0;
  background: #fff;
  appearance: none;
}
.combo-arrow {
  display: flex;
  align-items: center;
  justify-content: center;
  width: 16px;
  color: #808080;
}
.effects {
  height: 89px;
  margin-top: 10px;
  border: 1px solid;
  border-color: #808080 #fff #fff #808080;
  box-shadow: inset 1px 1px #000, inset -1px -1px #c0c0c0;
  background: #fff;
}
.effect {
  display: flex;
  align-items: center;
  gap: 2px;
  padding: 1px 0 0 23px;
}
.order {
  display: flex;
  align-items: center;
  justify-content: flex-end;
  gap: 6px;
  margin: 6px 0 11px;
}
.order span {
  margin-right: 2px;
}
hr {
  height: 2px;
  margin: 0;
  border: 0;
  border-top: 1px solid #808080;
  background: #fff;
}
.run {
  display: flex;
  gap: 6px;
  margin: 6px 0;
}
.check {
  display: flex;
  align-items: center;
  gap: 4px;
  margin-top: 6px;
}
.check input {
  width: 13px;
  height: 13px;
  margin: 0;
  appearance: none;
  border: 1px solid;
  border-color: #808080 #fff #fff #808080;
  background: #fff;
}
.check input:checked::after {
  content: '';
  display: block;
  width: 4px;
  height: 7px;
  margin: 1px 0 0 4px;
  border: solid #000;
  border-width: 0 2px 2px 0;
  transform: rotate(40deg);
}

/* drawing bar and status */
.drawing {
  margin-left: 403px;
  padding-right: 4px;
}
.drawing .grip {
  width: 12px;
}
.status {
  display: flex;
  height: 22px;
  padding: 2px 0;
  border-top: 1px solid #808080;
  background: #c0c0c0;
}
.cell {
  display: flex;
  align-items: center;
  padding: 1px 0 0 7px;
  border-right: 1px solid #fff;
  box-shadow: inset -1px 0 #a8a8a8;
  white-space: nowrap;
}
.hint {
  width: 519px;
}
.geometry {
  width: 222px;
  padding-left: 10px;
}
.geometry svg {
  margin-right: 4px;
}
.at {
  width: 87px;
}
.mod {
  width: 22px;
  padding-left: 6px;
}
.blank {
  width: 29px;
}
.page {
  width: 163px;
}
.master {
  flex: 1;
}
.zoomer {
  gap: 6px;
  width: 143px;
  padding-left: 10px;
}
.zoomer input {
  width: 97px;
  height: 12px;
  margin: 0;
  appearance: none;
  background: linear-gradient(#808080, #808080) 46px 1px / 2px 10px no-repeat, linear-gradient(#808080, #808080) 0 5px / 100% 2px no-repeat;
}
.zoomer input::-webkit-slider-thumb {
  appearance: none;
  width: 8px;
  height: 8px;
  border: 1px solid #999;
  border-radius: 50%;
  background: #fff;
}
.percent {
  width: 48px;
  padding-left: 11px;
  border: 0;
  box-shadow: none;
}

/* task bar */
.taskbar {
  display: flex;
  align-items: center;
  height: 29px;
  padding: 2px 2px 0;
  border-top: 1px solid #2b3945;
  background: linear-gradient(180deg, #1d2c3a 0, #101a26 35%, #0d1520 100%);
}
.app {
  width: 23px;
  height: 24px;
  margin-right: 4px;
  border-radius: 4px;
}
.impress {
  background: linear-gradient(#c08a70, #a04c28);
}
.web {
  background: linear-gradient(#7a8cb8, #4c6298);
}
.files {
  background: linear-gradient(#8298b0, #4a7090);
}
.tray {
  width: 20px;
  margin-right: 8px;
}
.tray.clip {
  margin-right: 12px;
}
.tray.clip + .reel {
  width: 22px;
  margin: 0 8px 0 -4px;
}
.tray.wifi {
  width: 18px;
}
.tray.up {
  width: 10px;
  margin: 0 10px 0 3px;
}
time {
  color: #dcdfe2;
  font-size: 18px;
  line-height: 24px;
}
.credit {
  display: flex;
  justify-content: space-between;
  height: 12px;
  padding: 0 3px 0 2px;
  background: #1b232e;
  color: #9a9fa5;
  font: bold 11px/12px 'Liberation Sans', Arial, sans-serif;
  white-space: nowrap;
}
.credit b {
  color: #eee;
}
</style>
